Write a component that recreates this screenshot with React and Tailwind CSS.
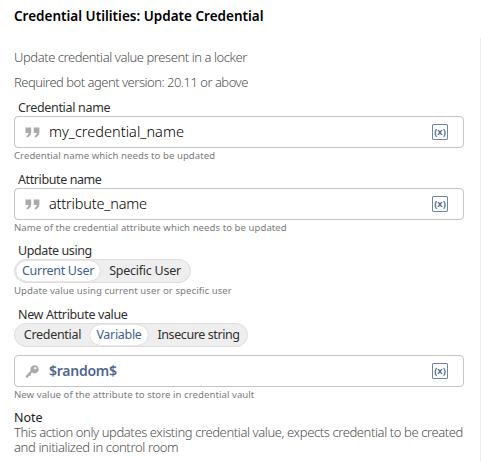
import React from "react";

function Label({ children, className = "" }) {
  return <div className={`pl-1 h-[18px] pt-px leading-[18px] text-[12.5px] text-[#303030] ${className}`}>{children}</div>;
}

function Help({ children, className = "" }) {
  return <div className={`h-[15px] leading-[16px] text-[9.6px] tracking-[0.05px] text-[#7c7c7c] ${className}`}>{children}</div>;
}

function QuoteIcon() {
  return (
    <svg width="15" height="11" viewBox="0 0 15 11" fill="#aaaaaa" className="block">
      <path d="M0.5 0.5H6.2V5Q6.2 9.5 1.8 10.4L1.4 9Q3.6 8.2 3.6 6H0.5Z" />
      <path d="M8.7 0.5H14.4V5Q14.4 9.5 10 10.4L9.6 9Q11.8 8.2 11.8 6H8.7Z" />
    </svg>
  );
}

function KeyIcon() {
  return (
    <svg width="14" height="13" viewBox="0 0 14 13" className="block">
      <path
        fill="#aaaaaa"
        fillRule="evenodd"
        d="M9.3 0.3a4 4 0 1 1-2.1 7.1L5.6 9 6 10 5 11 4 10.6 3.4 11.2 3.6 12 2.6 12.8 0.8 12.2 0.7 11 5.6 5.7A4 4 0 0 1 9.3 0.3ZM10.3 2a1.1 1.1 0 1 0 .01 0Z"
      />
    </svg>
  );
}

function Field({ icon, children }) {
  return (
    <div className="flex h-8 w-[450px] items-center rounded-[4px] border border-[#c4c4c4] bg-white pl-[10px] pr-[15px]">
      <div className="w-6 shrink-0">{icon}</div>
      <div className="mb-[2px] flex-1 leading-5">{children}</div>
      <div className="flex h-4 w-4 items-center justify-center rounded-[1px] border border-[#6d86ab] pb-px text-[9.5px] font-semibold leading-none text-[#45608a]">
        (x)
      </div>
    </div>
  );
}

function Segments({ children, className }) {
  return (
    <div className={`flex h-6 items-center rounded-full border border-[#dedede] bg-[#eeeeee] text-[12.5px] leading-5 text-[#303030] ${className}`}>
      {children}
    </div>
  );
}

export default function App() {
  return (
    <main className="h-[462px] w-[481px] overflow-hidden bg-white font-['Noto_Sans',sans-serif] whitespace-nowrap">
      <h1 className="h-8 pl-[14px] text-[13.5px] font-semibold leading-8 text-black">
        <span>Credential Utilities: Update Credential</span>
      </h1>
      <div className="mt-[6px] h-[424px] w-[481px] border-r border-[#eeeeee] pl-[14px] pt-[7px]">
        <div className="h-[25px] text-[13px] font-light leading-[25px] text-[#505050]"><span className="tracking-[-0.44px]">Update credential value present in a locker</span></div>
        <div className="mb-[3px] h-[25px] text-[13px] font-light leading-[25px] text-[#505050]"><span className="tracking-[-0.5px]">Required bot agent version: 20.11 or above</span></div>
        <Label className="tracking-[-0.32px]">Credential name</Label>
        <Field icon={<QuoteIcon />}><span className="text-[14.5px] font-light tracking-[0.03px] text-black">my_credential_name</span></Field>
        <Help>Credential name which needs to be updated</Help>
        <Label className="mt-[7px] tracking-[-0.4px]">Attribute name</Label>
        <Field icon={<QuoteIcon />}><span className="text-[14.5px] font-light tracking-[-0.18px] text-black">attribute_name</span></Field>
        <Help>Name of the credential attribute which needs to be updated</Help>
        <Label className="mt-[6px] tracking-[-0.4px]">Update using</Label>
        <Segments className="w-[177px]">
          <span className="ml-[1px] h-5 w-[85px] rounded-full bg-white text-center text-[#3f5f8f] shadow-[0_0_1px_#aaaaaa] tracking-[-0.3px]">Current User</span>
          <span className="w-[91px] text-center tracking-[-0.25px]">Specific User</span>
        </Segments>
        <Help>Update value using current user or specific user</Help>
        <Label className="mt-[7px] tracking-[-0.36px]">New Attribute value</Label>
        <Segments className="w-[234px]">
          <span className="w-[75px] text-center tracking-[-0.3px]">Credential</span>
          <span className="h-5 w-[58px] rounded-full bg-white text-center text-[#3f5f8f] shadow-[0_0_1px_#aaaaaa] tracking-[-0.3px]">Variable</span>
          <span className="w-[99px] pl-[2px] text-center tracking-[-0.4px]">Insecure string</span>
        </Segments>
        <div className="h-2" />
        <Field icon={<KeyIcon />}><span className="text-[14px] font-semibold tracking-[-0.25px] text-[#50688c]">$random$</span></Field>
        <Help>New value of the attribute to store in credential vault</Help>
        <div className="mt-[8px] h-[15px] text-[12.5px] leading-[15px] text-[#202020]">Note</div>
        <p className="text-[13px] font-light leading-[15px] text-[#505050]">
          <span className="tracking-[-0.4px]">This action only updates existing credential value, expects credential to be created</span><br />
          <span className="tracking-[-0.36px]">and initialized in control room</span>
        </p>
      </div>
    </main>
  );
}
